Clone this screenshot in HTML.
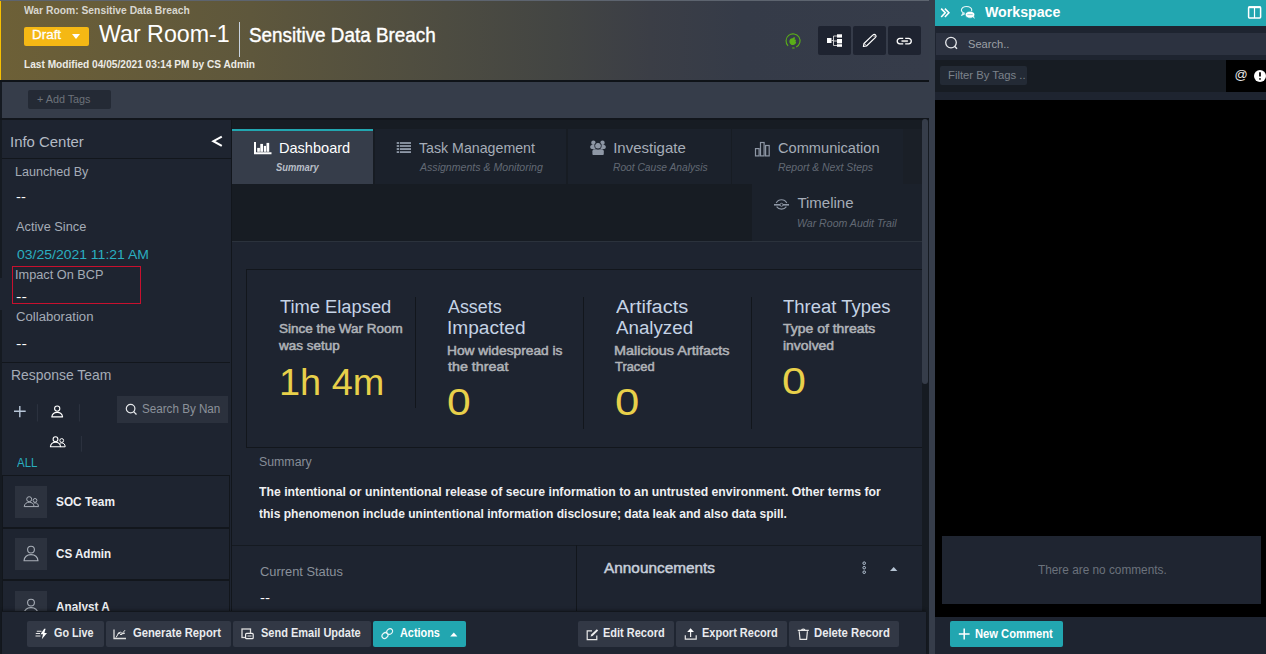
<!DOCTYPE html>
<html><head><meta charset="utf-8"><style>
*{margin:0;padding:0;box-sizing:border-box}
html,body{width:1266px;height:654px;overflow:hidden;background:#363d4a;font-family:"Liberation Sans",sans-serif;color:#fff}
.a{position:absolute}
.t{position:absolute;white-space:nowrap;transform-origin:0 0}
</style></head><body>
<!-- HEADER -->
<div class="a" style="left:0;top:0;width:929px;height:80px;background:linear-gradient(90deg,#6d6037 0%,#5e573c 27%,#4d4c41 48%,#434543 60%,#3b3e46 70%,#353b48 80%,#363c4a 100%)"></div>
<div class="a" style="left:0;top:1px;width:1px;height:79px;background:#f8c000"></div>
<div class="a" style="left:0;top:0;width:929px;height:1px;background:#5d646f"></div>
<div class="a" style="left:0;top:80px;width:929px;height:2px;background:#0f1318"></div>
<div class="a" style="left:24px;top:27px;width:65px;height:19px;background:#f5b814;border-radius:2px"></div>
<div class="a" style="left:72px;top:34px;width:0;height:0;border-left:4px solid transparent;border-right:4px solid transparent;border-top:5px solid #fff"></div>
<div class="a" style="left:239px;top:22px;width:1px;height:35px;background:#c9d3e0"></div>
<!-- green icon -->
<svg class="a" style="left:784px;top:32px" width="18" height="18" viewBox="0 0 18 18">
<path d="M4.1 13.8 A7 7 0 1 1 12.2 15.1" fill="none" stroke="#5aae18" stroke-width="1.1"/>
<path d="M8.2 16 L10.6 16" stroke="#5aae18" stroke-width="1.1"/>
<path d="M5.4 9.6 C5.4 7.4 6.8 6.2 8.6 6.3 L10.1 5 L11.2 5.9 L10.4 7.2 L12.1 7.9 L11.5 9.2 L12.2 10.8 C11 12.8 9.2 13.4 7.6 12.9 C6.2 12.3 5.4 11.1 5.4 9.6Z" fill="#5aae18"/>
</svg>
<!-- header buttons -->
<div class="a" style="left:818px;top:26px;width:33px;height:29px;background:#1e2330;border-radius:2px"></div>
<div class="a" style="left:853px;top:26px;width:33px;height:29px;background:#1e2330;border-radius:2px"></div>
<div class="a" style="left:888px;top:26px;width:33px;height:29px;background:#1e2330;border-radius:2px"></div>
<svg class="a" style="left:826px;top:33px" width="17" height="15" viewBox="0 0 17 15">
<rect x="1" y="5" width="4.5" height="5" fill="#fff"/>
<rect x="11" y="1.3" width="5" height="3.3" fill="#fff"/>
<rect x="11" y="6" width="5" height="4.4" fill="#fff"/>
<rect x="11" y="11.2" width="5" height="2.6" fill="#fff"/>
<path d="M5.5 7.5 H7.5 M7.5 3 V12.5 M7.5 3 H11 M7.5 8 H11 M7.5 12.5 H11" stroke="#ddd" stroke-width="0.9" fill="none"/>
</svg>
<svg class="a" style="left:861px;top:33px" width="17" height="16" viewBox="0 0 17 16">
<path d="M2.4 13.4 L3 10.5 L12 1.9 C12.7 1.2 13.8 1.2 14.5 1.9 C15.2 2.6 15.2 3.7 14.5 4.4 L5.5 13 Z" fill="none" stroke="#fff" stroke-width="1.2" stroke-linejoin="round"/>
<path d="M3.2 10.5 L5.4 12.8" stroke="#fff" stroke-width="0.9"/>
<circle cx="13.2" cy="3.2" r="0.9" fill="#888"/>
</svg>
<svg class="a" style="left:896px;top:36px" width="17" height="10" viewBox="0 0 17 10">
<path d="M7.2 2.4 H3.9 A2.7 2.7 0 0 0 3.9 7.8 H7.2 M9.2 2.4 H12.6 A2.7 2.7 0 0 1 12.6 7.8 H9.2" fill="none" stroke="#fff" stroke-width="1.3"/>
<rect x="5.5" y="4.1" width="6.4" height="2" fill="#c8c8c8"/>
</svg>

<!-- TAGS BAR -->
<div class="a" style="left:0;top:82px;width:2px;height:572px;background:#151a21"></div>
<div class="a" style="left:28px;top:90px;width:83px;height:19px;background:#242a35;border-radius:2px"></div>
<div class="a" style="left:0;top:118px;width:929px;height:2px;background:#12161c"></div>

<!-- LEFT PANEL -->
<div class="a" style="left:2px;top:120px;width:229px;height:491px;background:#1e2430"></div>
<div class="a" style="left:231px;top:120px;width:1px;height:491px;background:#12161c"></div>
<div class="a" style="left:2px;top:158px;width:229px;height:1px;background:#12161c"></div>
<svg class="a" style="left:210px;top:134px" width="14" height="15" viewBox="0 0 14 15">
<path d="M11.8 2.6 L3.4 7.2 L11.8 11.8" fill="none" stroke="#fff" stroke-width="2.1"/>
</svg>
<div class="a" style="left:0;top:278px;width:2px;height:32px;background:#1e2430"></div>
<div class="a" style="left:12px;top:266px;width:129px;height:38px;border:1px solid #c8102e"></div>
<div class="a" style="left:2px;top:362px;width:228px;height:1px;background:#12161c"></div>
<svg class="a" style="left:12px;top:403px" width="75" height="50" viewBox="0 0 75 50">
<path d="M7.8 3 V14.2 M2 8.3 H13.7" stroke="#b8c6d8" stroke-width="1.4"/>
<path d="M25.4 1.2 V18.5 M67.4 1.2 V18.5 M69.4 33 V48.7" stroke="#2d3440" stroke-width="1"/>
<circle cx="45.2" cy="5.6" r="2.6" fill="none" stroke="#fff" stroke-width="1.1"/>
<path d="M39.8 13.9 C40.3 10.8 42.6 9.4 45.2 9.4 C47.8 9.4 50.1 10.8 50.6 13.9 Z" fill="none" stroke="#fff" stroke-width="1.1" stroke-linejoin="round"/>
<circle cx="43.5" cy="36.2" r="2.4" fill="none" stroke="#fff" stroke-width="1.1"/>
<circle cx="49.7" cy="37.5" r="1.9" fill="none" stroke="#fff" stroke-width="1"/>
<path d="M38.4 43.8 C38.8 40.6 41 39.2 43.5 39.2 C46 39.2 48.2 40.6 48.6 43.8 Z" fill="none" stroke="#fff" stroke-width="1.1" stroke-linejoin="round"/>
<path d="M48 40.3 C48.5 40 49 39.9 49.7 39.9 C51.6 39.9 53 41 53.2 43.8 H48.6" fill="none" stroke="#fff" stroke-width="1" stroke-linejoin="round"/>
</svg>
<div class="a" style="left:117px;top:396px;width:111px;height:27px;background:#2b313d"></div>
<svg class="a" style="left:125px;top:403px" width="13" height="13" viewBox="0 0 13 13">
<circle cx="5.6" cy="5.6" r="4.3" fill="none" stroke="#e6e8eb" stroke-width="1.2"/>
<path d="M8.6 8.6 L11.5 11.5" stroke="#e6e8eb" stroke-width="1.3"/>
</svg>
<!-- cards -->
<div class="a" style="left:2px;top:475px;width:228px;height:53px;border:1px solid #12161c;background:#1e2430"></div>
<div class="a" style="left:2px;top:528px;width:228px;height:52px;border:1px solid #12161c;background:#1e2430"></div>
<div class="a" style="left:2px;top:580px;width:228px;height:40px;border:1px solid #12161c;background:#1e2430"></div>
<div class="a" style="left:15px;top:486px;width:32px;height:32px;background:#2c323e"></div>
<div class="a" style="left:15px;top:538px;width:32px;height:32px;background:#2c323e"></div>
<div class="a" style="left:15px;top:591px;width:32px;height:32px;background:#2c323e"></div>
<svg class="a" style="left:15px;top:486px" width="32" height="32" viewBox="0 0 32 32">
<circle cx="14.2" cy="13.2" r="2.5" fill="none" stroke="#a9afb8" stroke-width="1"/>
<circle cx="20" cy="14.4" r="1.9" fill="none" stroke="#a9afb8" stroke-width="1"/>
<path d="M9.2 20.6 C9.6 17.6 11.7 16.2 14.2 16.2 C16.7 16.2 18.8 17.6 19.2 20.6 Z" fill="none" stroke="#a9afb8" stroke-width="1" stroke-linejoin="round"/>
<path d="M18.6 17.1 C19 16.9 19.5 16.8 20 16.8 C21.9 16.8 23.3 17.9 23.5 20.6 H19.2" fill="none" stroke="#a9afb8" stroke-width="1" stroke-linejoin="round"/>
</svg>
<svg class="a" style="left:15px;top:538px" width="32" height="32" viewBox="0 0 32 32">
<circle cx="16" cy="11.6" r="3.4" fill="none" stroke="#a9afb8" stroke-width="1.1"/>
<path d="M9 22.8 C9.5 18.2 12.3 16.6 16 16.6 C19.7 16.6 22.5 18.2 23 22.8 Z" fill="none" stroke="#a9afb8" stroke-width="1.1" stroke-linejoin="round"/>
</svg>
<svg class="a" style="left:15px;top:591px" width="32" height="32" viewBox="0 0 32 32">
<circle cx="16" cy="11.6" r="3.4" fill="none" stroke="#a9afb8" stroke-width="1.1"/>
<path d="M9 22.8 C9.5 18.2 12.3 16.6 16 16.6 C19.7 16.6 22.5 18.2 23 22.8 Z" fill="none" stroke="#a9afb8" stroke-width="1.1" stroke-linejoin="round"/>
</svg>

<!-- MAIN CONTENT -->
<div class="a" style="left:232px;top:120px;width:690px;height:121px;background:#171c23"></div>
<div class="a" style="left:232px;top:241px;width:690px;height:1px;background:#2b323c"></div>
<div class="a" style="left:232px;top:242px;width:690px;height:369px;background:#1e2430"></div>
<!-- tabs -->
<div class="a" style="left:232px;top:129px;width:141px;height:55px;background:#363d4a;border-top:2px solid #22a6b0"></div>
<div class="a" style="left:375px;top:129px;width:191px;height:55px;background:#1b212b"></div>
<div class="a" style="left:568px;top:129px;width:163px;height:55px;background:#1b212b"></div>
<div class="a" style="left:732px;top:129px;width:171px;height:55px;background:#1b212b"></div>
<div class="a" style="left:903px;top:129px;width:19px;height:55px;background:#1a1f27"></div>
<div class="a" style="left:752px;top:184px;width:170px;height:57px;background:#1b212b"></div>
<svg class="a" style="left:253px;top:141px" width="20" height="14" viewBox="0 0 20 14">
<path d="M2 0.9 V12.2 H18.5" fill="none" stroke="#fff" stroke-width="2"/>
<rect x="4.2" y="6.9" width="2.7" height="3.9" fill="#fff"/>
<rect x="7.3" y="2.9" width="2.7" height="7.9" fill="#fff"/>
<rect x="10.8" y="4.9" width="2.2" height="5.9" fill="#fff"/>
<rect x="13.5" y="1.9" width="2.7" height="8.9" fill="#fff"/>
</svg>
<svg class="a" style="left:396px;top:141px" width="16" height="13" viewBox="0 0 16 13">
<g fill="#8f99a8"><rect x="0.7" y="1.1" width="2.4" height="1.8"/><rect x="0.7" y="4.1" width="2.4" height="1.8"/><rect x="0.7" y="7.1" width="2.4" height="1.9"/><rect x="0.7" y="10.2" width="2.4" height="1.8"/>
<rect x="3.9" y="1.1" width="11.1" height="1.8"/><rect x="3.9" y="4.1" width="11.1" height="1.8"/><rect x="3.9" y="7.1" width="11.1" height="1.9"/><rect x="3.9" y="10.2" width="11.1" height="1.8"/></g>
</svg>
<svg class="a" style="left:589px;top:139px" width="19" height="17" viewBox="0 0 19 17">
<g fill="#8e97a5"><circle cx="4.4" cy="3.7" r="2.2"/><circle cx="13.5" cy="3.7" r="2.2"/>
<ellipse cx="4.4" cy="8" rx="3.2" ry="2.2"/><ellipse cx="13.6" cy="8" rx="3.2" ry="2.2"/>
<circle cx="9" cy="6.8" r="3"/>
<path d="M3.4 12.3 C3.4 10.8 4.6 10.3 6 10.3 H12 C13.4 10.3 14.8 10.8 14.8 12.3 V15 C14.8 15.8 14.2 16 13.5 16 H4.6 C3.9 16 3.4 15.8 3.4 15 Z"/></g>
<circle cx="9" cy="6.8" r="3.4" fill="none" stroke="#1b212b" stroke-width="0.8"/>
</svg>
<svg class="a" style="left:754px;top:141px" width="16" height="16" viewBox="0 0 16 16">
<g fill="none" stroke="#8e97a5" stroke-width="1.2"><rect x="1.5" y="7.6" width="3.6" height="7.3"/><rect x="6.5" y="1.5" width="3.6" height="13.4"/><rect x="11.6" y="4.5" width="3.6" height="10.4"/></g>
</svg>
<svg class="a" style="left:773px;top:197px" width="17" height="15" viewBox="0 0 17 15">
<g fill="none" stroke="#8e97a5" stroke-width="1.1"><path d="M3.2 6 A6 6 0 0 1 13.8 6"/><path d="M3.6 9.6 A6 6 0 0 0 13.4 9.6"/></g>
<path d="M1 7.8 H16" stroke="#8e97a5" stroke-width="1.6"/>
<circle cx="8.5" cy="7.8" r="1.5" fill="#1b212b" stroke="#8e97a5" stroke-width="0.9"/>
</svg>
<!-- stats panel -->
<div class="a" style="left:246px;top:269px;width:676px;height:179px;border:1px solid #12161c;border-right:none;background:#1e2430"></div>
<div class="a" style="left:415px;top:297px;width:1px;height:111px;background:#12161c"></div>
<div class="a" style="left:583px;top:297px;width:1px;height:132px;background:#12161c"></div>
<div class="a" style="left:751px;top:297px;width:1px;height:132px;background:#12161c"></div>
<!-- summary -->
<div class="a" style="left:232px;top:545px;width:690px;height:1px;background:#151a21"></div>
<div class="a" style="left:576px;top:545px;width:1px;height:66px;background:#12161c"></div>
<svg class="a" style="left:858px;top:559px" width="44" height="18" viewBox="0 0 44 18">
<g fill="none" stroke="#b5c3d3" stroke-width="1"><circle cx="6.2" cy="4.2" r="1.3"/><circle cx="6.2" cy="8.7" r="1.3"/><circle cx="6.2" cy="13.2" r="1.3"/></g>
<path d="M32 12 L35.7 8 L39.4 12 Z" fill="#b5c3d3"/>
</svg>

<!-- SCROLLBARS -->
<div class="a" style="left:922px;top:120px;width:7px;height:491px;background:#161b22"></div>
<div class="a" style="left:922px;top:119px;width:6px;height:265px;background:#363d4a;border-radius:3px"></div>
<div class="a" style="left:926px;top:611px;width:3px;height:43px;background:#161b22"></div>
<div class="a" style="left:929px;top:0;width:6px;height:653px;background:#363d4a;border-radius:0 0 3px 3px"></div>

<!-- BOTTOM BAR -->
<div class="a" style="z-index:5;left:0;top:0;width:0;height:0">
<div class="a" style="left:2px;top:611px;width:924px;height:43px;background:#1f2531;border-top:1px solid #12161c;box-shadow:0 -1px 3px rgba(0,0,0,0.35)"></div>
<div class="a" style="left:27px;top:621px;width:77px;height:26px;background:#323845;border-radius:2px"></div>
<div class="a" style="left:106px;top:621px;width:125px;height:26px;background:#323845;border-radius:2px"></div>
<div class="a" style="left:233px;top:621px;width:138px;height:26px;background:#323845;border-radius:2px"></div>
<div class="a" style="left:373px;top:621px;width:93px;height:26px;background:#22a6b0;border-radius:2px"></div>
<div class="a" style="left:578px;top:621px;width:96px;height:26px;background:#323845;border-radius:2px"></div>
<div class="a" style="left:676px;top:621px;width:111px;height:26px;background:#323845;border-radius:2px"></div>
<div class="a" style="left:789px;top:621px;width:110px;height:26px;background:#323845;border-radius:2px"></div>
<svg class="a" style="left:35px;top:628px" width="14" height="12" viewBox="0 0 14 12">
<path d="M9.2 0.8 L5.5 6.2 H8 L6.8 11.2 L12 5 H9.4 L10.6 0.8 Z" fill="#fff"/>
<path d="M0.8 5.5 H5 M0.5 8 H5.5 M1.8 3.2 H6.5" stroke="#e8e8e8" stroke-width="1.1"/>
</svg>
<svg class="a" style="left:113px;top:629px" width="15" height="11" viewBox="0 0 15 11">
<path d="M1 0.5 V9.5 H13" fill="none" stroke="#ddd" stroke-width="1.3"/>
<path d="M3 8.5 L6 3.5 L8 6 L12 1.2 M4.5 5 L7.5 3 L9.5 5 L12 4" fill="none" stroke="#eee" stroke-width="1"/>
</svg>
<svg class="a" style="left:241px;top:628px" width="14" height="12" viewBox="0 0 14 12">
<rect x="1" y="1" width="8.5" height="8.5" fill="none" stroke="#ddd" stroke-width="1.3"/>
<rect x="4.6" y="5.4" width="7.6" height="5.3" rx="1" fill="#323845" stroke="#eee" stroke-width="1.2"/>
<path d="M6.5 8 H10.5" stroke="#ddd" stroke-width="1"/>
</svg>
<svg class="a" style="left:380px;top:627px" width="15" height="13" viewBox="0 0 15 13">
<g fill="none" stroke="#e9f6f7" stroke-width="1.2"><ellipse cx="5" cy="8.5" rx="3.2" ry="2.6" transform="rotate(-40 5 8.5)"/><ellipse cx="9.6" cy="4.6" rx="3.2" ry="2.6" transform="rotate(-40 9.6 4.6)"/></g>
</svg>

<svg class="a" style="left:449px;top:630px" width="10" height="8" viewBox="0 0 10 8">
<path d="M1.2 6.6 L4.8 2.6 L8.4 6.6 Z" fill="#fff"/>
</svg>
<svg class="a" style="left:585px;top:628px" width="15" height="13" viewBox="0 0 15 13">
<path d="M7 2.8 H2.2 V11.6 H11.8 V7.6" fill="none" stroke="#e8e8e8" stroke-width="1.2"/>
<path d="M5.6 8.6 L6.2 6.6 L11.8 1.2 L13.2 2.6 L7.6 8 Z" fill="#eee"/>
</svg>
<svg class="a" style="left:683px;top:627px" width="15" height="14" viewBox="0 0 15 14">
<path d="M2.3 8.2 V12.2 H13.2 V8.2" fill="none" stroke="#e8e8e8" stroke-width="1.2"/>
<path d="M7.6 10 V3.5" stroke="#eee" stroke-width="1.2"/>
<path d="M4.2 5 L7.6 1.2 L11 5 Z" fill="#fff"/>
</svg>
<svg class="a" style="left:796px;top:627px" width="14" height="14" viewBox="0 0 14 14">
<path d="M1.8 3.4 H12.8 M5.5 3.2 C5.5 1.6 9 1.6 9 3.2" fill="none" stroke="#e8e8e8" stroke-width="1.2"/>
<path d="M3.2 4.2 L4 12.4 H10.6 L11.4 4.2" fill="none" stroke="#e8e8e8" stroke-width="1.2"/>
</svg>

</div>
<!-- RIGHT PANEL -->
<div class="a" style="left:935px;top:0;width:331px;height:654px;background:#000"></div>
<div class="a" style="left:935px;top:0;width:331px;height:26px;background:#22a6b0"></div>
<div class="a" style="left:935px;top:26px;width:331px;height:34px;background:#1e2430"></div>
<div class="a" style="left:936px;top:33px;width:330px;height:22px;background:#2c3240"></div>
<div class="a" style="left:935px;top:60px;width:331px;height:32px;background:#171c23"></div>
<div class="a" style="left:1226px;top:60px;width:40px;height:32px;background:#000"></div>
<div class="a" style="left:935px;top:92px;width:331px;height:8px;background:#1e2430"></div>
<div class="a" style="left:940px;top:66px;width:87px;height:19px;background:#232a35;border-radius:2px"></div>
<div class="a" style="left:942px;top:536px;width:319px;height:68px;background:#1f2531"></div>
<div class="a" style="left:935px;top:617px;width:331px;height:37px;background:#1e2430"></div>
<div class="a" style="left:950px;top:621px;width:113px;height:26px;background:#22a6b0;border-radius:2px"></div>
<svg class="a" style="left:957px;top:626px" width="14" height="16" viewBox="0 0 14 16">
<path d="M7.2 2.5 V13.5 M1.8 8 H12.6" stroke="#fff" stroke-width="1.5"/>
</svg>
<svg class="a" style="left:938px;top:5px" width="40" height="17" viewBox="0 0 40 17">
<path d="M3.2 3.6 L7.2 7.8 L3.2 12 M6.9 3.6 L10.9 7.8 L6.9 12" fill="none" stroke="#fff" stroke-width="1.6"/>
<path d="M26.8 8.3 A5.2 3.5 0 1 1 33.2 6.6" fill="none" stroke="#e8f6f7" stroke-width="1.1"/>
<path d="M25 8 L23.4 10.6 L27 8.9" fill="#e8f6f7" stroke="#e8f6f7" stroke-width="0.8"/>
<ellipse cx="32" cy="9.7" rx="4.8" ry="3.5" fill="#fff" stroke="#22a6b0" stroke-width="0.7"/>
<path d="M34.8 12 L36.8 14 L35.9 11 Z" fill="#fff"/>
<path d="M29.3 9.6 H34.7" stroke="#9ad6da" stroke-width="1.1"/>
</svg>
<svg class="a" style="left:1246px;top:5px" width="17" height="15" viewBox="0 0 17 15">
<rect x="2.6" y="1.9" width="12" height="11" rx="0.8" fill="none" stroke="#fff" stroke-width="1.5"/>
<path d="M2.6 2.2 H14.6" stroke="#fff" stroke-width="2"/>
<path d="M8.5 2 V13" stroke="#fff" stroke-width="1.2"/>
</svg>
<svg class="a" style="left:943px;top:35px" width="17" height="17" viewBox="0 0 17 17">
<circle cx="8" cy="7.6" r="5.3" fill="none" stroke="#e6e8eb" stroke-width="1.3"/>
<path d="M11.6 11.3 L14 13.8" stroke="#e6e8eb" stroke-width="1.4"/>
</svg>
<svg class="a" style="left:1232px;top:66px" width="34" height="18" viewBox="0 0 34 18">
<text x="2.6" y="12.6" font-size="13" font-family="Liberation Sans" fill="#e8e8e8">@</text>
<circle cx="28" cy="10" r="6" fill="#fff"/>
<path d="M28 6.3 V10.6" stroke="#000" stroke-width="1.8"/>
<circle cx="28" cy="12.9" r="0.9" fill="#000"/>
</svg>

<div class="t" id="t0" style="left:23.59px;top:5.20px;font-size:10.5px;line-height:10.5px;color:#d8d7d0;font-weight:bold;transform:scaleX(0.9822);">War Room: Sensitive Data Breach</div>
<div class="t" id="t1" style="left:32.28px;top:28.90px;font-size:12.5px;line-height:12.5px;color:#ffffff;transform:scaleX(1.0743);-webkit-text-stroke:0.3px #fff;">Draft</div>
<div class="t" id="t2" style="left:98.86px;top:21.70px;font-size:24px;line-height:24px;color:#ffffff;transform:scaleX(0.9669);">War Room-1</div>
<div class="t" id="t3" style="left:249.04px;top:25.00px;font-size:20px;line-height:20px;color:#ffffff;transform:scaleX(0.9435);-webkit-text-stroke:0.4px #fff;">Sensitive Data Breach</div>
<div class="t" id="t4" style="left:23.59px;top:59.80px;font-size:10px;line-height:10px;color:#ecebe6;font-weight:bold;transform:scaleX(1.0130);">Last Modified 04/05/2021 03:14 PM by CS Admin</div>
<div class="t" id="t5" style="left:36.76px;top:95.00px;font-size:10px;line-height:10px;color:#6d727a;transform:scaleX(1.0782);">+ Add Tags</div>
<div class="t" id="t6" style="left:10.41px;top:134.00px;font-size:15px;line-height:15px;color:#b3bac4;transform:scaleX(0.9944);">Info Center</div>
<div class="t" id="t7" style="left:15.30px;top:166.20px;font-size:12.5px;line-height:12.5px;color:#a5acb7;transform:scaleX(1.0058);">Launched By</div>
<div class="t" id="t8" style="left:16.21px;top:191.00px;font-size:12.5px;line-height:12.5px;color:#ffffff;transform:scaleX(1.1736);">--</div>
<div class="t" id="t9" style="left:16.29px;top:221.00px;font-size:12.5px;line-height:12.5px;color:#a5acb7;transform:scaleX(1.0210);">Active Since</div>
<div class="t" id="t10" style="left:17.24px;top:248.90px;font-size:12.5px;line-height:12.5px;color:#2aafc0;transform:scaleX(1.1187);">03/25/2021 11:21 AM</div>
<div class="t" id="t11" style="left:15.49px;top:268.90px;font-size:12.5px;line-height:12.5px;color:#a5acb7;transform:scaleX(1.0181);">Impact On BCP</div>
<div class="t" id="t12" style="left:16.35px;top:290.50px;font-size:12.5px;line-height:12.5px;color:#ffffff;transform:scaleX(1.2964);">--</div>
<div class="t" id="t13" style="left:16.47px;top:310.70px;font-size:12.5px;line-height:12.5px;color:#a5acb7;transform:scaleX(1.0513);">Collaboration</div>
<div class="t" id="t14" style="left:16.35px;top:338.00px;font-size:12.5px;line-height:12.5px;color:#ffffff;transform:scaleX(1.2964);">--</div>
<div class="t" id="t15" style="left:11.04px;top:368.20px;font-size:14.5px;line-height:14.5px;color:#a5acb7;transform:scaleX(0.9596);">Response Team</div>
<div class="t" id="t16" style="left:141.73px;top:403.20px;font-size:12px;line-height:12px;color:#8b919a;transform:scaleX(0.9705);">Search By Nan</div>
<div class="t" id="t17" style="left:16.65px;top:457.20px;font-size:12.5px;line-height:12.5px;color:#2aafc0;transform:scaleX(0.9196);">ALL</div>
<div class="t" id="t18" style="left:55.93px;top:494.60px;font-size:13px;line-height:13px;color:#eef0f3;font-weight:bold;transform:scaleX(0.9100);">SOC Team</div>
<div class="t" id="t19" style="left:55.93px;top:547.30px;font-size:13px;line-height:13px;color:#eef0f3;font-weight:bold;transform:scaleX(0.8946);">CS Admin</div>
<div class="t" id="t20" style="left:55.93px;top:599.80px;font-size:13px;line-height:13px;color:#eef0f3;font-weight:bold;transform:scaleX(0.9038);">Analyst A</div>
<div class="t" id="t21" style="left:278.82px;top:140.40px;font-size:15px;line-height:15px;color:#ffffff;transform:scaleX(0.9697);">Dashboard</div>
<div class="t" id="t22" style="left:276.43px;top:162.00px;font-size:10.5px;line-height:10.5px;color:#b9bfc8;font-weight:bold;font-style:italic;transform:scaleX(0.8902);">Summary</div>
<div class="t" id="t23" style="left:419.03px;top:140.40px;font-size:15px;line-height:15px;color:#a6adb8;transform:scaleX(0.9460);">Task Management</div>
<div class="t" id="t24" style="left:420.16px;top:162.00px;font-size:10.5px;line-height:10.5px;color:#626974;font-style:italic;transform:scaleX(1.0073);">Assignments &amp; Monitoring</div>
<div class="t" id="t25" style="left:613.20px;top:140.40px;font-size:15px;line-height:15px;color:#a6adb8;">Investigate</div>
<div class="t" id="t26" style="left:612.59px;top:162.00px;font-size:10.5px;line-height:10.5px;color:#626974;font-style:italic;transform:scaleX(0.9747);">Root Cause Analysis</div>
<div class="t" id="t27" style="left:777.81px;top:140.40px;font-size:15px;line-height:15px;color:#a6adb8;transform:scaleX(0.9746);">Communication</div>
<div class="t" id="t28" style="left:777.58px;top:162.00px;font-size:10.5px;line-height:10.5px;color:#626974;font-style:italic;transform:scaleX(0.9929);">Report &amp; Next Steps</div>
<div class="t" id="t29" style="left:797.39px;top:195.40px;font-size:15px;line-height:15px;color:#a6adb8;">Timeline</div>
<div class="t" id="t30" style="left:796.58px;top:217.70px;font-size:10.5px;line-height:10.5px;color:#626974;font-style:italic;transform:scaleX(1.0066);">War Room Audit Trail</div>
<div class="t" id="t31" style="left:279.66px;top:297.90px;font-size:18px;line-height:18px;color:#c5d3e5;transform:scaleX(1.0172);">Time Elapsed</div>
<div class="t" id="t32" style="left:278.86px;top:323.10px;font-size:12.5px;line-height:12.5px;color:#b0b3b8;transform:scaleX(1.0769);-webkit-text-stroke:0.5px #b0b3b8;">Since the War Room</div>
<div class="t" id="t33" style="left:278.86px;top:340.00px;font-size:12.5px;line-height:12.5px;color:#b0b3b8;transform:scaleX(1.0785);-webkit-text-stroke:0.5px #b0b3b8;">was setup</div>
<div class="t" id="t34" style="left:279.26px;top:364.90px;font-size:36px;line-height:36px;color:#e8d04a;transform:scaleX(1.0523);">1h 4m</div>
<div class="t" id="t35" style="left:447.67px;top:297.90px;font-size:18px;line-height:18px;color:#c5d3e5;transform:scaleX(0.9932);">Assets</div>
<div class="t" id="t36" style="left:446.63px;top:318.90px;font-size:18px;line-height:18px;color:#c5d3e5;transform:scaleX(1.0606);">Impacted</div>
<div class="t" id="t37" style="left:446.85px;top:344.60px;font-size:12.5px;line-height:12.5px;color:#b0b3b8;transform:scaleX(1.1008);-webkit-text-stroke:0.5px #b0b3b8;">How widespread is</div>
<div class="t" id="t38" style="left:447.81px;top:361.20px;font-size:12.5px;line-height:12.5px;color:#b0b3b8;transform:scaleX(1.1428);-webkit-text-stroke:0.5px #b0b3b8;">the threat</div>
<div class="t" id="t39" style="left:446.70px;top:385.10px;font-size:36px;line-height:36px;color:#e8d04a;transform:scaleX(1.1836);">0</div>
<div class="t" id="t40" style="left:615.58px;top:297.90px;font-size:18px;line-height:18px;color:#c5d3e5;transform:scaleX(1.1108);">Artifacts</div>
<div class="t" id="t41" style="left:615.65px;top:318.90px;font-size:18px;line-height:18px;color:#c5d3e5;transform:scaleX(1.0410);">Analyzed</div>
<div class="t" id="t42" style="left:613.83px;top:344.60px;font-size:12.5px;line-height:12.5px;color:#b0b3b8;transform:scaleX(1.1532);-webkit-text-stroke:0.5px #b0b3b8;">Malicious Artifacts</div>
<div class="t" id="t43" style="left:614.88px;top:361.20px;font-size:12.5px;line-height:12.5px;color:#b0b3b8;transform:scaleX(1.0316);-webkit-text-stroke:0.5px #b0b3b8;">Traced</div>
<div class="t" id="t44" style="left:614.65px;top:385.10px;font-size:36px;line-height:36px;color:#e8d04a;transform:scaleX(1.2127);">0</div>
<div class="t" id="t45" style="left:783.06px;top:297.90px;font-size:18px;line-height:18px;color:#c5d3e5;transform:scaleX(1.0263);">Threat Types</div>
<div class="t" id="t46" style="left:783.24px;top:323.10px;font-size:12.5px;line-height:12.5px;color:#b0b3b8;transform:scaleX(1.1167);-webkit-text-stroke:0.5px #b0b3b8;">Type of threats</div>
<div class="t" id="t47" style="left:783.23px;top:340.00px;font-size:12.5px;line-height:12.5px;color:#b0b3b8;transform:scaleX(1.1146);-webkit-text-stroke:0.5px #b0b3b8;">involved</div>
<div class="t" id="t48" style="left:782.08px;top:363.70px;font-size:36px;line-height:36px;color:#e8d04a;transform:scaleX(1.1952);">0</div>
<div class="t" id="t49" style="left:259.10px;top:455.50px;font-size:12.5px;line-height:12.5px;color:#868d97;transform:scaleX(0.9871);">Summary</div>
<div class="t" id="t50" style="left:259.11px;top:485.40px;font-size:13px;line-height:13px;color:#eff0f2;font-weight:bold;transform:scaleX(0.9408);">The intentional or unintentional release of secure information to an untrusted environment. Other terms for</div>
<div class="t" id="t51" style="left:259.12px;top:507.40px;font-size:13px;line-height:13px;color:#eff0f2;font-weight:bold;transform:scaleX(0.9264);">this phenomenon include unintentional information disclosure; data leak and also data spill.</div>
<div class="t" id="t52" style="left:259.68px;top:566.10px;font-size:12.5px;line-height:12.5px;color:#8a919b;transform:scaleX(1.0279);">Current Status</div>
<div class="t" id="t53" style="left:259.60px;top:592.00px;font-size:12.5px;line-height:12.5px;color:#ffffff;transform:scaleX(1.2009);">--</div>
<div class="t" id="t54" style="left:604.37px;top:561.20px;font-size:14.5px;line-height:14.5px;color:#c8d0dc;transform:scaleX(1.0597);-webkit-text-stroke:0.45px #c8d0dc;">Announcements</div>
<div class="t" id="t55" style="left:54.36px;top:627.00px;font-size:12px;line-height:12px;color:#e9ebee;font-weight:bold;transform:scaleX(0.8973);z-index:6;">Go Live</div>
<div class="t" id="t56" style="left:133.15px;top:627.00px;font-size:12px;line-height:12px;color:#e9ebee;font-weight:bold;transform:scaleX(0.9350);z-index:6;">Generate Report</div>
<div class="t" id="t57" style="left:260.56px;top:627.20px;font-size:12px;line-height:12px;color:#e9ebee;font-weight:bold;transform:scaleX(0.9171);z-index:6;">Send Email Update</div>
<div class="t" id="t58" style="left:400.15px;top:627.20px;font-size:12px;line-height:12px;color:#ffffff;font-weight:bold;transform:scaleX(0.9064);z-index:6;">Actions</div>
<div class="t" id="t59" style="left:602.56px;top:627.20px;font-size:12px;line-height:12px;color:#e9ebee;font-weight:bold;transform:scaleX(0.9160);z-index:6;">Edit Record</div>
<div class="t" id="t60" style="left:701.96px;top:627.20px;font-size:12px;line-height:12px;color:#e9ebee;font-weight:bold;transform:scaleX(0.9153);z-index:6;">Export Record</div>
<div class="t" id="t61" style="left:813.75px;top:627.20px;font-size:12px;line-height:12px;color:#e9ebee;font-weight:bold;transform:scaleX(0.9406);z-index:6;">Delete Record</div>
<div class="t" id="t62" style="left:985.41px;top:4.30px;font-size:15px;line-height:15px;color:#ffffff;font-weight:bold;transform:scaleX(0.9448);">Workspace</div>
<div class="t" id="t63" style="left:967.94px;top:38.90px;font-size:11.5px;line-height:11.5px;color:#9ca0a6;transform:scaleX(0.9644);">Search..</div>
<div class="t" id="t64" style="left:948.34px;top:69.80px;font-size:11px;line-height:11px;color:#7c828b;transform:scaleX(1.0253);">Filter By Tags ..</div>
<div class="t" id="t65" style="left:1037.53px;top:563.50px;font-size:12px;line-height:12px;color:#6b727c;transform:scaleX(0.9848);">There are no comments.</div>
<div class="t" id="t66" style="left:974.55px;top:627.50px;font-size:12px;line-height:12px;color:#ffffff;font-weight:bold;transform:scaleX(0.9324);">New Comment</div>
</body></html>
